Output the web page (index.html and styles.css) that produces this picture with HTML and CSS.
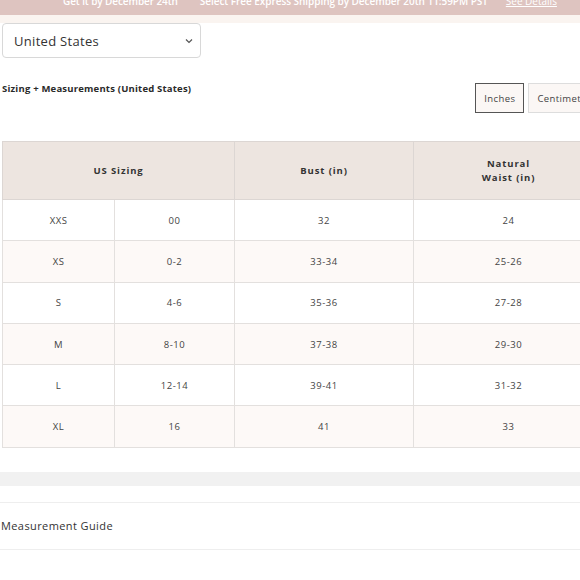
FILE: index.html
```html
<!DOCTYPE html>
<html>
<head>
<meta charset="utf-8">
<link rel="stylesheet" href="styles.css">
</head>
<body>
<div class="banner">
  <div class="banner-inner">
    <span class="b1">Get it by December 24th</span>
    <span class="b2">Select Free Express Shipping by December 20th 11:59PM PST</span>
    <span class="b3">See Details</span>
  </div>
</div>
<div class="strip"></div>
<main class="content">
  <div class="country">
    <span>United States</span>
    <svg class="chev" width="8" height="6" viewBox="0 0 8 6"><path d="M1 1.5 L4 4.5 L7 1.5" fill="none" stroke="#555" stroke-width="1.2"/></svg>
  </div>
  <div class="head-row">
    <h2 class="title">Sizing + Measurements (United States)</h2>
    <div class="units">
      <button class="unit active">Inches</button>
      <button class="unit">Centimeters</button>
    </div>
  </div>
  <div class="table-wrap">
    <table class="sizes">
      <colgroup>
        <col class="c1"><col class="c2"><col class="c3"><col class="c4"><col class="c5">
      </colgroup>
      <thead>
        <tr>
          <th colspan="2">US Sizing</th>
          <th>Bust (in)</th>
          <th>Natural<br>Waist (in)</th>
          <th>Hips (in)</th>
        </tr>
      </thead>
      <tbody>
        <tr><td>XXS</td><td>00</td><td>32</td><td>24</td><td>35</td></tr>
        <tr class="tint"><td>XS</td><td>0-2</td><td>33-34</td><td>25-26</td><td>36-37</td></tr>
        <tr><td>S</td><td>4-6</td><td>35-36</td><td>27-28</td><td>38-39</td></tr>
        <tr class="tint"><td>M</td><td>8-10</td><td>37-38</td><td>29-30</td><td>40-41</td></tr>
        <tr><td>L</td><td>12-14</td><td>39-41</td><td>31-32</td><td>42-44</td></tr>
        <tr class="tint"><td>XL</td><td>16</td><td>41</td><td>33</td><td>45</td></tr>
      </tbody>
    </table>
  </div>
  <div class="band"></div>
  <div class="guide">Measurement Guide</div>
</main>
</body>
</html>
```
FILE: styles.css
```css
html, body {
  margin: 0;
  padding: 0;
  background: #fff;
  overflow: hidden;
}
body {
  font-family: "Open Sans", "Liberation Sans", sans-serif;
  color: #333;
  width: 580px;
}
.banner {
  height: 15px;
  background: #dec4c0;
  overflow: hidden;
}
.banner-inner {
  display: flex;
  margin-top: -8px;
  padding-left: 63px;
  font-size: 10px;
  line-height: 18px;
  font-weight: 600;
  color: #fff;
  white-space: nowrap;
}
.b1 { letter-spacing: -0.1px; }
.b2 { margin-left: 22px; letter-spacing: -0.05px; }
.b3 { margin-left: 18px; text-decoration: underline; font-weight: 400; }
.strip {
  height: 8px;
  background: #faf4f0;
}
.country {
  margin-left: 2px;
  box-sizing: border-box;
  width: 199px;
  height: 35px;
  border: 1px solid #d8d8d8;
  border-radius: 4px;
  display: flex;
  align-items: center;
  justify-content: space-between;
  padding: 0 7px 0 11px;
  font-size: 13px;
  letter-spacing: 0.3px;
  color: #333;
}
.head-row {
  display: flex;
  justify-content: space-between;
  align-items: flex-start;
  margin-top: 25px;
  padding-left: 2px;
}
.title {
  margin: -1px 0 0;
  font-size: 9.5px;
  font-weight: 700;
  letter-spacing: 0.2px;
  color: #2a2a2a;
}
.units {
  display: flex;
  flex-shrink: 0;
  gap: 4px;
  margin-right: -25px;
}
.unit {
  height: 30px;
  padding: 0 8px;
  font-family: inherit;
  font-size: 9.5px;
  letter-spacing: 0.4px;
  color: #444;
  background: #fbf7f5;
  border: 1px solid #ddd;
  border-radius: 0;
}
.unit.active {
  border-color: #555;
}
.table-wrap {
  margin-top: 28px;
  padding-left: 2px;
  overflow: hidden;
}
.sizes {
  border-collapse: collapse;
  table-layout: fixed;
  width: 800px;
  font-size: 9.5px;
  letter-spacing: 0.5px;
  color: #444;
  border: 1px solid #dcdcdc;
}
.c1 { width: 112px; }
.c2 { width: 120px; }
.c3 { width: 179px; }
.c4 { width: 190px; }
.c5 { width: 199px; }
.sizes th {
  height: 57px;
  background: #ede5e0;
  font-weight: 700;
  font-size: 9.5px;
  line-height: 14px;
  letter-spacing: 0.9px;
  color: #333;
  border: 1px solid #dcd6d3;
  text-align: center;
  padding: 0;
}
.sizes td {
  height: 40.3px;
  text-align: center;
  border: 1px solid #e3e0de;
  padding: 0;
}
.sizes tr.tint td { background: #fdf9f7; }
.band {
  margin-top: 24px;
  margin-left: -2px;
  height: 14px;
  background: #f1f1f1;
}
.guide {
  margin-top: 16px;
  margin-left: -2px;
  padding: 0 0 0 3px;
  height: 46px;
  line-height: 46px;
  border-top: 1px solid #eee;
  border-bottom: 1px solid #eee;
  font-size: 11px;
  letter-spacing: 0.4px;
  color: #333;
}
```
